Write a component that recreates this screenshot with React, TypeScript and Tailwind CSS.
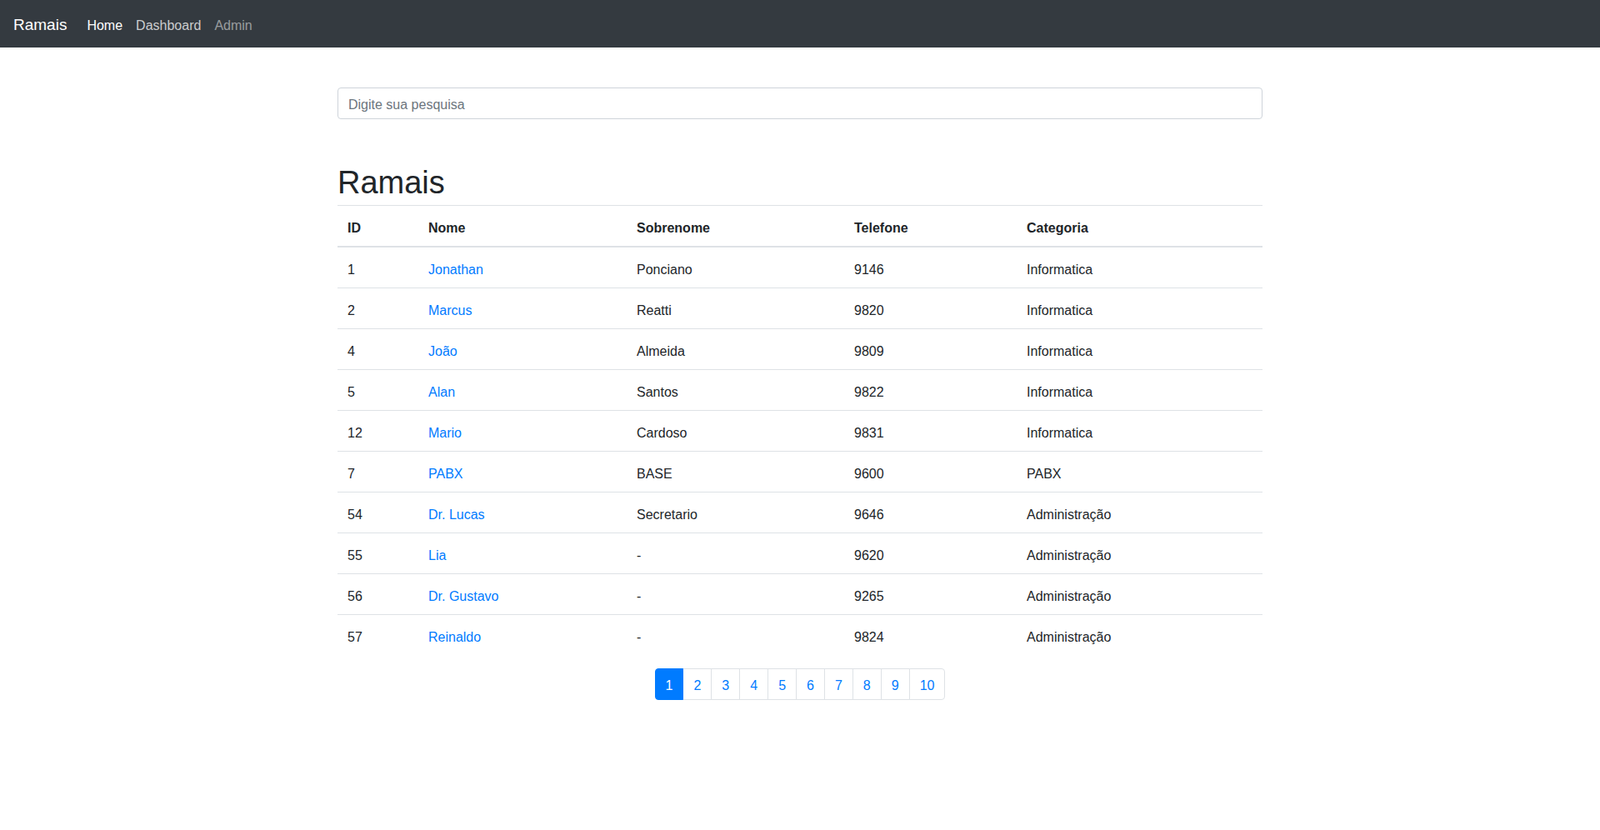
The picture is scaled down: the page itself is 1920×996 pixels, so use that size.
import React from "react";

const rows = [
  { id: "1", nome: "Jonathan", sobrenome: "Ponciano", tel: "9146", cat: "Informatica" },
  { id: "2", nome: "Marcus", sobrenome: "Reatti", tel: "9820", cat: "Informatica" },
  { id: "4", nome: "João", sobrenome: "Almeida", tel: "9809", cat: "Informatica" },
  { id: "5", nome: "Alan", sobrenome: "Santos", tel: "9822", cat: "Informatica" },
  { id: "12", nome: "Mario", sobrenome: "Cardoso", tel: "9831", cat: "Informatica" },
  { id: "7", nome: "PABX", sobrenome: "BASE", tel: "9600", cat: "PABX" },
  { id: "54", nome: "Dr. Lucas", sobrenome: "Secretario", tel: "9646", cat: "Administração" },
  { id: "55", nome: "Lia", sobrenome: "-", tel: "9620", cat: "Administração" },
  { id: "56", nome: "Dr. Gustavo", sobrenome: "-", tel: "9265", cat: "Administração" },
  { id: "57", nome: "Reinaldo", sobrenome: "-", tel: "9824", cat: "Administração" },
];

const pages = ["1", "2", "3", "4", "5", "6", "7", "8", "9", "10"];

export default function App() {
  return (
    <div
      className="min-h-[996px] bg-white text-[#212529] text-base leading-6"
      style={{ fontFamily: '"Liberation Sans", Arial, sans-serif' }}
    >
      <nav className="h-[57px] bg-[#343a40] flex items-center px-4">
        <a className="text-white text-[19px] leading-[30px] mr-4 pt-[6px] pb-[4px]">Ramais</a>
        <div className="flex">
          <a className="px-2 pt-[10px] pb-[6px] text-white">Home</a>
          <a className="px-2 pt-[10px] pb-[6px] text-white/75">Dashboard</a>
          <a className="px-2 pt-[10px] pb-[6px] text-white/50">Admin</a>
        </div>
      </nav>

      <div className="w-[1110px] mx-auto">
        <div className="pt-[48px]">
          <input
            className="w-full h-[38px] px-3 pt-[8px] pb-[4px] border border-[#ced4da] rounded-[4px] text-base text-[#495057] placeholder:text-[#6c757d] outline-none"
            placeholder="Digite sua pesquisa"
          />
        </div>

        <h1 className="mt-[47px] mb-2 text-[38px] leading-[48px] pt-[5px] pb-0 h-[48px] font-normal">Ramais</h1>

        <table className="w-full border-collapse mb-4 table-fixed">
          <colgroup>
            <col className="w-[97px]" />
            <col className="w-[250px]" />
            <col className="w-[261px]" />
            <col className="w-[207px]" />
            <col />
          </colgroup>
          <thead>
            <tr>
              {["ID", "Nome", "Sobrenome", "Telefone", "Categoria"].map((h) => (
                <th
                  key={h}
                  className="text-left font-bold px-3 pt-[15px] pb-[9px] border-t border-[#dee2e6] border-b-2 border-b-[#dee2e6] align-bottom"
                >
                  {h}
                </th>
              ))}
            </tr>
          </thead>
          <tbody>
            {rows.map((r) => (
              <tr key={r.id}>
                <td className="px-3 pt-[15px] pb-[9px] border-t border-[#dee2e6]">{r.id}</td>
                <td className="px-3 pt-[15px] pb-[9px] border-t border-[#dee2e6]">
                  <a className="text-[#007bff]">{r.nome}</a>
                </td>
                <td className="px-3 pt-[15px] pb-[9px] border-t border-[#dee2e6]">{r.sobrenome}</td>
                <td className="px-3 pt-[15px] pb-[9px] border-t border-[#dee2e6]">{r.tel}</td>
                <td className="px-3 pt-[15px] pb-[9px] border-t border-[#dee2e6]">{r.cat}</td>
              </tr>
            ))}
          </tbody>
        </table>

        <div className="flex justify-center">
          <ul className="flex">
            {pages.map((p, i) => (
              <li key={p} className={i > 0 ? "-ml-px" : ""}>
                <a
                  className={
                    "block px-3 pt-[10px] pb-[6px] leading-5 border " +
                    (i === 0
                      ? "bg-[#007bff] border-[#007bff] text-white rounded-l-[4px] relative z-10"
                      : "bg-white border-[#dee2e6] text-[#007bff]") +
                    (i === pages.length - 1 ? " rounded-r-[4px]" : "")
                  }
                >
                  {p}
                </a>
              </li>
            ))}
          </ul>
        </div>
      </div>
    </div>
  );
}
